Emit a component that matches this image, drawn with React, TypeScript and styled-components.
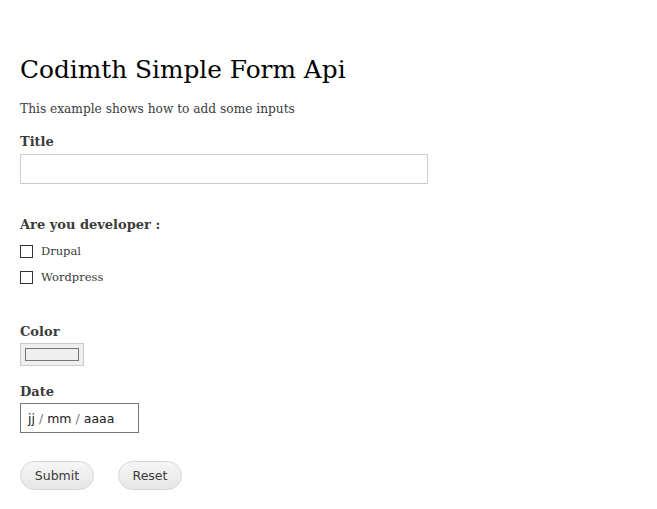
import styled, { createGlobalStyle } from "styled-components";

const GlobalStyle = createGlobalStyle`
  html, body {
    margin: 0;
    padding: 0;
    background: #fff;
  }
  body {
    font-family: "DejaVu Serif", Georgia, serif;
    color: #3b3b3b;
  }
`;

const Page = styled.div`
  padding: 52px 20px 20px;
  width: 408px;
`;

const Heading = styled.h1`
  margin: 0 0 11px;
  font-size: 24.8px;
  font-weight: normal;
  line-height: 36px;
  color: #000;
`;

const Intro = styled.p`
  margin: 0 0 13px;
  font-size: 12.2px;
  line-height: 20px;
`;

const Field = styled.div<{ $gap?: number }>`
  margin-bottom: ${(p) => p.$gap ?? 0}px;
`;

const Label = styled.label<{ $tight?: boolean }>`
  display: block;
  font-size: 13px;
  font-weight: bold;
  line-height: 20px;
  margin-bottom: ${(p) => (p.$tight ? 1 : 2)}px;
`;

const TextInput = styled.input`
  display: block;
  box-sizing: border-box;
  width: 408px;
  height: 30px;
  margin: 0;
  border: 1px solid #ccc;
  border-radius: 0;
  outline: none;
`;

const CheckRow = styled.label`
  display: flex;
  align-items: center;
  gap: 8px;
  height: 20px;
  margin-top: 6px;
  font-size: 11.5px;
`;

const Box = styled.input.attrs({ type: "checkbox" })`
  appearance: none;
  margin: 0;
  width: 13px;
  height: 13px;
  border: 1px solid #333;
  box-sizing: border-box;
  background: #fff;
`;

const ColorWell = styled.div`
  box-sizing: border-box;
  width: 64px;
  height: 23px;
  padding: 4px;
  background: #efefef;
  border: 1px solid #ccc;
`;

const Swatch = styled.div`
  box-sizing: border-box;
  height: 13px;
  border: 1px solid #767676;
  background: #efefef;
`;

const DateBox = styled.div`
  box-sizing: border-box;
  width: 119px;
  height: 30px;
  border: 1px solid #767676;
  display: flex;
  align-items: center;
  padding-left: 7px;
  font-family: "DejaVu Sans", "Open Sans", sans-serif;
  font-size: 12.5px;
  color: #222;
`;

const Sep = styled.span`
  color: #777;
  margin: 0 4px;
`;

const Actions = styled.div`
  display: flex;
  gap: 24px;
  margin-top: 28px;
`;

const Button = styled.button<{ $w: number }>`
  width: ${(p) => p.$w}px;
  height: 29px;
  border: 1px solid #d6d6d6;
  border-radius: 15px;
  background: linear-gradient(#f6f6f6, #e6e6e6);
  font-family: "DejaVu Sans", "Open Sans", sans-serif;
  font-size: 12.5px;
  color: #3a3a3a;
  padding: 0;
`;

export default function App() {
  return (
    <>
      <GlobalStyle />
      <Page>
        <Heading>Codimth Simple Form Api</Heading>
        <Intro>This example shows how to add some inputs</Intro>
        <Field $gap={31}>
          <Label>Title</Label>
          <TextInput />
        </Field>
        <Field $gap={35}>
          <Label>Are you developer :</Label>
          <CheckRow>
            <Box />
            Drupal
          </CheckRow>
          <CheckRow>
            <Box />
            Wordpress
          </CheckRow>
        </Field>
        <Field $gap={16}>
          <Label $tight>Color</Label>
          <ColorWell>
            <Swatch />
          </ColorWell>
        </Field>
        <Field>
          <Label $tight>Date</Label>
          <DateBox>
            jj<Sep>/</Sep>mm<Sep>/</Sep>aaaa
          </DateBox>
        </Field>
        <Actions>
          <Button $w={74}>Submit</Button>
          <Button $w={64}>Reset</Button>
        </Actions>
      </Page>
    </>
  );
}
